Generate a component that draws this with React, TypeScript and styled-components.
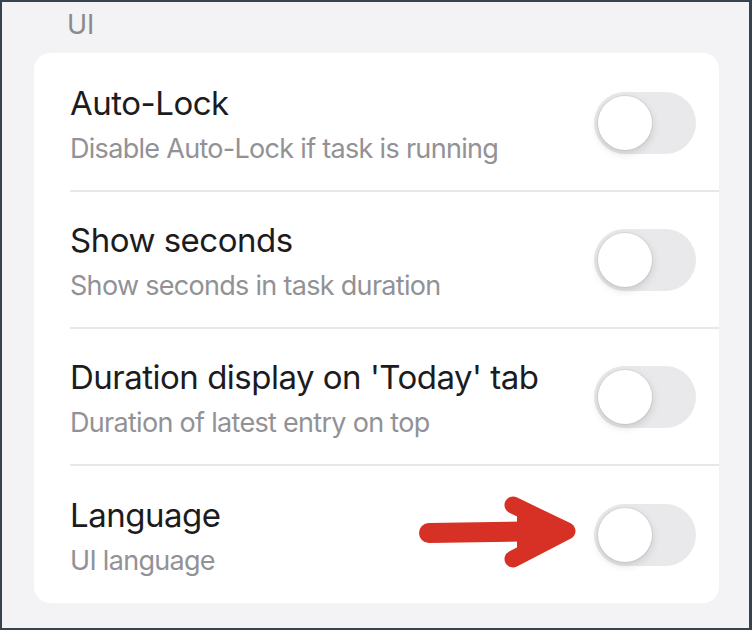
import React from 'react';
import styled, { createGlobalStyle } from 'styled-components';

const GlobalStyle = createGlobalStyle`
  html, body {
    margin: 0;
    padding: 0;
    background: #37424f;
  }
  * {
    box-sizing: border-box;
  }
`;

interface Setting {
  title: string;
  subtitle: string;
}

const settings: Setting[] = [
  { title: 'Auto-Lock', subtitle: 'Disable Auto-Lock if task is running' },
  { title: 'Show seconds', subtitle: 'Show seconds in task duration' },
  {
    title: "Duration display on 'Today' tab",
    subtitle: 'Duration of latest entry on top',
  },
  { title: 'Language', subtitle: 'UI language' },
];

const Arrow = () => (
  <ArrowSvg width="170" height="80" viewBox="0 0 170 80">
    <line
      x1="12"
      y1="38"
      x2="140"
      y2="36"
      stroke="#d63124"
      strokeWidth="20"
      strokeLinecap="round"
    />
    <polygon points="100,16 152,36 100,58" fill="#d63124" />
    <polyline
      points="96,10 150,36 96,64"
      fill="none"
      stroke="#d63124"
      strokeWidth="17"
      strokeLinecap="round"
      strokeLinejoin="round"
    />
  </ArrowSvg>
);

export default function App() {
  return (
    <Frame>
      <GlobalStyle />
      <SectionLabel>UI</SectionLabel>
      <Card>
        {settings.map((s, i) => (
          <Row key={s.title} $last={i === settings.length - 1}>
            <TextBlock>
              <Title>{s.title}</Title>
              <Subtitle>{s.subtitle}</Subtitle>
            </TextBlock>
            <Toggle>
              <Knob />
            </Toggle>
            {i === settings.length - 1 && <Arrow />}
          </Row>
        ))}
      </Card>
    </Frame>
  );
}

const Frame = styled.div`
  width: 752px;
  height: 630px;
  border: 2px solid #37424f;
  border-right-width: 3px;
  background: #f3f2f4;
  padding: 0 30px 0 32px;
  font-family: Inter, 'Liberation Sans', sans-serif;
`;

const SectionLabel = styled.div`
  height: 51px;
  padding: 7px 0 0 33px;
  font-size: 27px;
  line-height: 32px;
  color: #8a8a8e;
`;

const Card = styled.div`
  background: #ffffff;
  border-radius: 16px;
  padding-top: 2px;
  overflow: hidden;
`;

const Row = styled.div<{ $last: boolean }>`
  position: relative;
  height: 137px;
  margin-left: 36px;
  padding-right: 23px;
  display: flex;
  align-items: center;
  justify-content: space-between;
  border-bottom: ${({ $last }) => ($last ? 'none' : '2px solid #e8e8ea')};
`;

const TextBlock = styled.div`
  display: flex;
  flex-direction: column;
  gap: 8px;
  padding-top: 5px;
`;

const Title = styled.div`
  font-size: 33px;
  line-height: 40px;
  letter-spacing: -0.5px;
  color: #1c1c1e;
`;

const Subtitle = styled.div`
  font-size: 27px;
  line-height: 36px;
  letter-spacing: -0.7px;
  color: #929296;
`;

const Toggle = styled.div`
  position: relative;
  width: 102px;
  height: 62px;
  border-radius: 31px;
  background: #e9e9eb;
  flex-shrink: 0;
`;

const Knob = styled.div`
  position: absolute;
  left: 4px;
  top: 4px;
  width: 54px;
  height: 54px;
  border-radius: 50%;
  background: #ffffff;
  box-shadow: 0 3px 8px rgba(0, 0, 0, 0.15), 0 0 0 1px rgba(0, 0, 0, 0.05);
`;

const ArrowSvg = styled.svg`
  position: absolute;
  left: 347px;
  top: 29px;
`;
